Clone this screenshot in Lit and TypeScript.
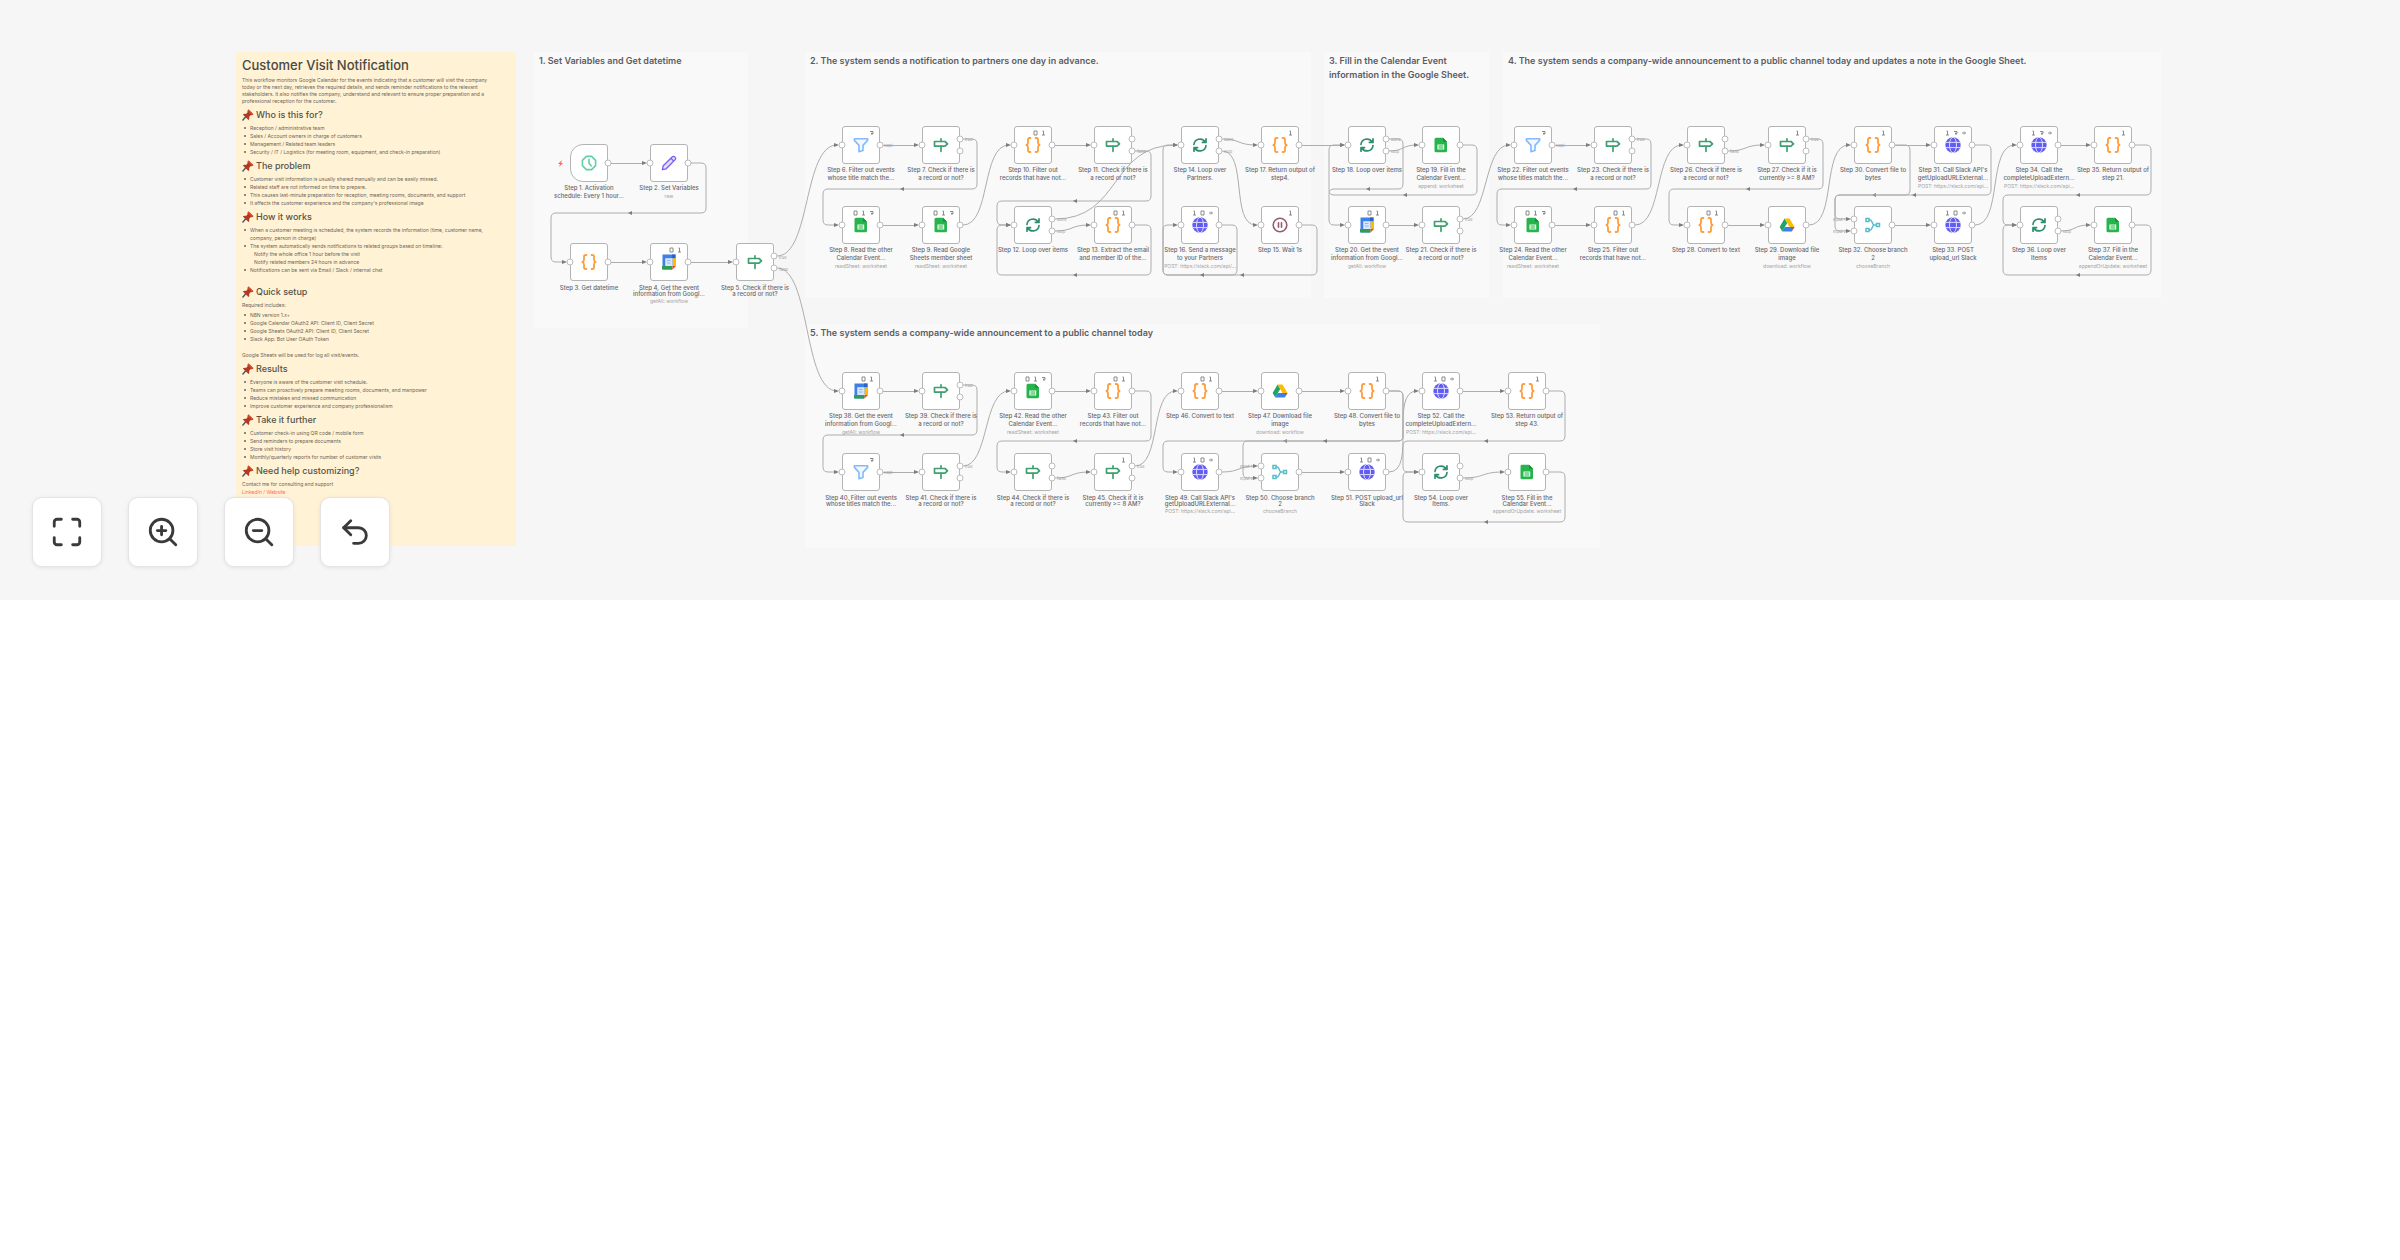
import { LitElement, html, svg, css, nothing } from "lit";
import { customElement, property } from "lit/decorators.js";
import { classMap } from "lit/directives/class-map.js";

type IconName =
  | "clock" | "pencil" | "code" | "calendar" | "sign" | "filter"
  | "sheet" | "loop" | "http" | "wait" | "drive" | "merge";

interface FlowNode {
  x: number;
  y: number;
  icon: IconName;
  lines: string[];
  sub?: string;
  badges?: string;
  tight?: boolean;
}

interface Section {
  x: number;
  y: number;
  w: number;
  h: number;
  title: string[];
}

const SECTIONS: Section[] = [
  { x: 534, y: 52, w: 214, h: 276, title: ["1. Set Variables and Get datetime"] },
  { x: 805, y: 52, w: 506, h: 246, title: ["2. The system sends a notification to partners one day in advance."] },
  { x: 1324, y: 52, w: 165, h: 246, title: ["3. Fill in the Calendar Event", "information in the Google Sheet."] },
  { x: 1503, y: 52, w: 658, h: 246, title: ["4. The system sends a company-wide announcement to a public channel today and updates a note in the Google Sheet."] },
  { x: 805, y: 324, w: 795, h: 224, title: ["5. The system sends a company-wide announcement to a public channel today"] },
];

const node = (
  x: number, y: number, icon: IconName, lines: string[], badges = "", sub = "",
): FlowNode => ({ x, y, icon, lines, badges, sub, tight: y === 262 || y === 472 });

const NODES: FlowNode[] = [
  node(589, 163, "clock", ["Step 1. Activation", "schedule: Every 1 hour..."]),
  node(669, 163, "pencil", ["Step 2. Set Variables"], "", "raw"),
  node(589, 262, "code", ["Step 3. Get datetime"]),
  node(669, 262, "calendar", ["Step 4. Get the event", "information from Googl..."], "c1", "getAll: workflow"),
  node(755, 262, "sign", ["Step 5. Check if there is", "a record or not?"]),

  node(861, 145, "filter", ["Step 6. Filter out events", "whose title match the..."], "r"),
  node(941, 145, "sign", ["Step 7. Check if there is", "a record or not?"]),
  node(861, 225, "sheet", ["Step 8. Read the other", "Calendar Event..."], "c1r", "readSheet: worksheet"),
  node(941, 225, "sheet", ["Step 9. Read Google", "Sheets member sheet"], "c1r", "readSheet: worksheet"),
  node(1033, 145, "code", ["Step 10. Filter out", "records that have not..."], "c1"),
  node(1113, 145, "sign", ["Step 11. Check if there is", "a record or not?"]),
  node(1033, 225, "loop", ["Step 12. Loop over items"]),
  node(1113, 225, "code", ["Step 13. Extract the email", "and member ID of the..."], "c1"),
  node(1200, 145, "loop", ["Step 14. Loop over", "Partners."]),
  node(1280, 145, "code", ["Step 17. Return output of", "step4."], "1"),
  node(1200, 225, "http", ["Step 16. Send a message", "to your Partners"], "1cp", "POST: https://slack.com/api/..."),
  node(1280, 225, "wait", ["Step 15. Wait 1s"], "1"),

  node(1367, 145, "loop", ["Step 18. Loop over items"]),
  node(1441, 145, "sheet", ["Step 19. Fill in the", "Calendar Event..."], "", "append: worksheet"),
  node(1367, 225, "calendar", ["Step 20. Get the event", "information from Googl..."], "c1", "getAll: workflow"),
  node(1441, 225, "sign", ["Step 21. Check if there is", "a record or not?"]),

  node(1533, 145, "filter", ["Step 22. Filter out events", "whose titles match the..."], "r"),
  node(1613, 145, "sign", ["Step 23. Check if there is", "a record or not?"]),
  node(1533, 225, "sheet", ["Step 24. Read the other", "Calendar Event..."], "c1r", "readSheet: worksheet"),
  node(1613, 225, "code", ["Step 25. Filter out", "records that have not..."], "c1"),
  node(1706, 145, "sign", ["Step 26. Check if there is", "a record or not?"]),
  node(1787, 145, "sign", ["Step 27. Check if it is", "currently >= 8 AM?"], "1"),
  node(1706, 225, "code", ["Step 28. Convert to text"], "c1"),
  node(1787, 225, "drive", ["Step 29. Download file", "image"], "", "download: workflow"),
  node(1873, 145, "code", ["Step 30. Convert file to", "bytes"], "1"),
  node(1953, 145, "http", ["Step 31. Call Slack API's", "getUploadURLExternal..."], "1rp", "POST: https://slack.com/api..."),
  node(1873, 225, "merge", ["Step 32. Choose branch", "2"], "", "chooseBranch"),
  node(1953, 225, "http", ["Step 33. POST", "upload_url Slack"], "1cp"),
  node(2039, 145, "http", ["Step 34. Call the", "completeUploadExtern..."], "1rp", "POST: https://slack.com/api..."),
  node(2113, 145, "code", ["Step 35. Return output of", "step 21."], "1"),
  node(2039, 225, "loop", ["Step 36. Loop over", "Items"]),
  node(2113, 225, "sheet", ["Step 37. Fill in the", "Calendar Event..."], "", "appendOrUpdate: worksheet"),

  node(861, 391, "calendar", ["Step 38. Get the event", "information from Googl..."], "c1", "getAll: workflow"),
  node(941, 391, "sign", ["Step 39. Check if there is", "a record or not?"]),
  node(861, 472, "filter", ["Step 40. Filter out events", "whose titles match the..."], "r"),
  node(941, 472, "sign", ["Step 41. Check if there is", "a record or not?"]),
  node(1033, 391, "sheet", ["Step 42. Read the other", "Calendar Event..."], "c1r", "readSheet: worksheet"),
  node(1113, 391, "code", ["Step 43. Filter out", "records that have not..."], "c1"),
  node(1033, 472, "sign", ["Step 44. Check if there is", "a record or not?"]),
  node(1113, 472, "sign", ["Step 45. Check if it is", "currently >= 8 AM?"], "1"),
  node(1200, 391, "code", ["Step 46. Convert to text"], "c1"),
  node(1280, 391, "drive", ["Step 47. Download file", "image"], "", "download: workflow"),
  node(1200, 472, "http", ["Step 49. Call Slack API's", "getUploadURLExternal..."], "1cp", "POST: https://slack.com/api..."),
  node(1280, 472, "merge", ["Step 50. Choose branch", "2"], "", "chooseBranch"),
  node(1367, 391, "code", ["Step 48. Convert file to", "bytes"], "1"),
  node(1441, 391, "http", ["Step 52. Call the", "completeUploadExtern..."], "1cp", "POST: https://slack.com/api..."),
  node(1367, 472, "http", ["Step 51. POST upload_url", "Slack"], "1cp"),
  node(1441, 472, "loop", ["Step 54. Loop over", "Items."]),
  node(1527, 391, "code", ["Step 53. Return output of", "step 43."], "1"),
  node(1527, 472, "sheet", ["Step 55. Fill in the", "Calendar Event..."], "", "appendOrUpdate: worksheet"),
];

/* Straight links: [source centre x, target centre x, y] */
const STRAIGHT: number[][] = [
  [589, 669, 163], [589, 669, 262], [669, 755, 262],
  [861, 941, 145], [861, 941, 225], [1033, 1113, 145], [1280, 1367, 145],
  [1367, 1441, 225],
  [1533, 1613, 145], [1533, 1613, 225], [1706, 1787, 225], [1873, 1953, 145],
  [1873, 1953, 225], [2039, 2113, 145],
  [861, 941, 391], [861, 941, 472], [1033, 1113, 391], [1200, 1280, 391],
  [1280, 1367, 391], [1280, 1367, 472], [1441, 1527, 391],
];

/* S-curves: [source centre x, out y, target centre x, in y] */
const CURVES: number[][] = [
  [755, 256, 861, 145], [755, 268, 861, 391],
  [941, 225, 1033, 145], [1033, 219, 1200, 145], [1033, 231, 1113, 225],
  [1200, 139, 1280, 145], [1200, 151, 1280, 225],
  [1367, 151, 1441, 145], [1441, 219, 1533, 145],
  [1613, 225, 1706, 145], [1706, 151, 1787, 145], [1787, 225, 1873, 145],
  [1953, 225, 2039, 145], [2039, 231, 2113, 225],
  [941, 466, 1033, 391], [1033, 478, 1113, 472], [1113, 466, 1200, 391],
  [1200, 472, 1280, 466], [1367, 472, 1441, 391], [1441, 478, 1527, 472],
];

/* Wrap-around links: [source x, out y, right x, middle y, left x, target x, in y, arrow x] */
const WRAPS: number[][] = [
  [669, 163, 706, 213, 551, 589, 262, 630],
  [941, 139, 977, 189, 823, 861, 225, 902],
  [1113, 151, 1151, 201, 997, 1033, 225, 1075],
  [1113, 225, 1151, 275, 997, 1033, 225, 1075],
  [1280, 225, 1317, 275, 1163, 1200, 225, 1242],
  [1200, 225, 1237, 275, 1163, 1200, 145, 1202],
  [1367, 139, 1403, 189, 1329, 1367, 225, 1368],
  [1441, 145, 1477, 195, 1329, 1367, 145, 1405],
  [1613, 139, 1651, 189, 1497, 1533, 225, 1575],
  [1787, 139, 1823, 189, 1669, 1706, 225, 1748],
  [1873, 145, 1910, 195, 1835, 1873, 231, 1874],
  [1953, 145, 1991, 195, 1835, 1873, 219, 1914],
  [2113, 145, 2151, 195, 2003, 2039, 225, 2078],
  [2113, 225, 2151, 275, 2003, 2039, 225, 2078],
  [941, 385, 977, 435, 823, 861, 472, 902],
  [1113, 391, 1151, 441, 997, 1033, 472, 1075],
  [1367, 391, 1403, 441, 1163, 1200, 472, 1285],
  [1367, 391, 1403, 441, 1243, 1280, 478, 1325],
  [1527, 391, 1565, 441, 1403, 1441, 472, 1486],
  [1527, 472, 1565, 522, 1403, 1441, 472, 1486],
];

const EDGE_LABELS: [number, number, string][] = [
  [779, 258, "true"], [779, 270, "false"], [884, 146, "Kept"], [965, 140, "true"],
  [1057, 220, "done"], [1057, 232, "loop"], [1137, 152, "false"], [1224, 140, "done"],
  [1224, 152, "loop"], [1391, 140, "done"], [1391, 152, "loop"], [1465, 220, "true"],
  [1556, 146, "Kept"], [1637, 140, "true"], [1730, 152, "false"], [1811, 140, "true"],
  [2063, 232, "loop"], [965, 386, "true"], [884, 473, "Kept"], [965, 467, "true"],
  [1057, 479, "false"], [1137, 467, "true"], [1465, 479, "loop"],
  [1833, 220, "Input 1"], [1833, 232, "Input 2"], [1240, 467, "Input 1"], [1240, 479, "Input 2"],
];

function wrapPath([sx, sy, r, m, l, tx, ty]: number[]): string {
  const c = 5;
  const v = ty > m ? 1 : -1;
  return (
    `M${sx + 22},${sy} H${r - c} Q${r},${sy} ${r},${sy + c} V${m - c} Q${r},${m} ${r - c},${m} ` +
    `H${l + c} Q${l},${m} ${l},${m + v * c} V${ty - v * c} Q${l},${ty} ${l + c},${ty} H${tx - 24}`
  );
}

function curvePath([sx, sy, tx, ty]: number[]): string {
  const a = sx + 22;
  const b = tx - 24;
  const k = Math.max(Math.abs(b - a) * 0.55, Math.min(Math.abs(ty - sy) * 0.35, 34));
  return `M${a},${sy} C${a + k},${sy} ${b - k},${ty} ${b},${ty}`;
}

const tip = (x: number, y: number) => svg`<path class="tip" d="M${x - 27},${y - 2}l5,2l-5,2z"></path>`;

const ICONS: Record<IconName, unknown> = {
  clock: svg`<g fill="none" stroke="#63cfa3" stroke-width="1.6" stroke-linecap="round" stroke-linejoin="round"><path d="M5.4 1.4h5.2l4 4v5.200l-4 4H5.400l-4-4V5.400z"></path><path d="M8 4.200v4l2.200 2.600"></path></g>`,
  pencil: svg`<g fill="#e4dcff" stroke="#7a5cf0" stroke-width="1.300" stroke-linejoin="round"><path d="M1.400 14.600l.8-3.800L11.400 1.800a1.500 1.500 0 0 1 2.200 0l.6.6a1.500 1.500 0 0 1 0 2.200L5.200 13.800z"></path><path d="M10 3.400l2.600 2.600"></path></g>`,
  code: svg`<g fill="none" stroke="#ff9d3c" stroke-width="1.800" stroke-linecap="round" stroke-linejoin="round"><path d="M5.400 1H4.600C3.400 1 3 1.700 3 2.800v2.700C3 7 2.300 7.600 1.300 8 2.300 8.400 3 9 3 10.500v2.700C3 14.300 3.400 15 4.600 15h.8"></path><path d="M10.600 1h.8c1.200 0 1.600.7 1.600 1.800v2.700c0 1.500.7 2.100 1.700 2.500-1 .4-1.700 1-1.700 2.500v2.700c0 1.100-.4 1.800-1.600 1.800h-.8"></path></g>`,
  calendar: svg`<path fill="#3f7fe8" d="M1.500.5h13v11h-3.500v4h-9.500z"></path><path fill="#2a62d0" d="M11 .5h3.500V4H11z"></path><path fill="#fbbc04" d="M11.500 4.200h3.500v7.800h-3.500z"></path><path fill="#2f9e4f" d="M1 12h10.500v3.500H2a1 1 0 0 1-1-1z"></path><path fill="#ea4335" d="M11.500 12H15l-3.500 3.500z"></path><path fill="#d7e6ff" d="M4.200 4.200h7.300V12H4.200z"></path><path fill="none" stroke="#8db7f7" d="M6 6.500h3.500M6 9h3.500"></path>`,
  sign: svg`<g fill="none" stroke="#3f9f70" stroke-width="1.700" stroke-linejoin="round" stroke-linecap="round"><path d="M1.500 4.500h10.500l2.500 2.300-2.500 2.300H1.500z"></path><path d="M8 1.800v2.500M8 9.300v5"></path></g>`,
  filter: svg`<path fill="#f2f8ff" stroke="#84bafa" stroke-width="1.600" stroke-linejoin="round" d="M1.400 1.800h13.200v1.600L10 8.400v5.200l-4 1.200V8.400L1.400 3.400z"></path>`,
  sheet: svg`<path fill="#28b44c" d="M3 .8h7l4 4v9a1.500 1.500 0 0 1-1.500 1.500H3a1.500 1.500 0 0 1-1.500-1.500V2.300A1.500 1.500 0 0 1 3 .8z"></path><path fill="#1b8f3a" d="M10 .8l4 4h-4z"></path><path fill="none" stroke="#e8fbe9" stroke-width="1.200" d="M5 8h5.600v4H5zM5 10h5.600"></path>`,
  loop: svg`<g fill="none" stroke="#2f8f6c" stroke-width="1.700" stroke-linecap="round" stroke-linejoin="round"><path d="M2 7.500A6 6 0 0 1 13 4.800M14 1.800v3.600h-3.600"></path><path d="M14 8.500A6 6 0 0 1 3 11.200M2 14.200v-3.600h3.600"></path></g>`,
  http: svg`<circle cx="8" cy="8" r="7.700" fill="#625df2"></circle><g fill="none" stroke="#dedcff" stroke-width="1"><ellipse cx="8" cy="8" rx="3.500" ry="7.700"></ellipse><path d="M1 5.400h14M1 10.600h14"></path></g>`,
  wait: svg`<g fill="none" stroke="#965a74" stroke-width="1.600" stroke-linecap="round"><circle cx="8" cy="8" r="6.800"></circle><path d="M6.500 5.800v4.400M9.500 5.800v4.400"></path></g>`,
  drive: svg`<path fill="#1fa463" d="M5.600 1.600L8.200 6 3.300 14.400.6 9.900z"></path><path fill="#fbbc04" d="M5.600 1.600h4.900l5 8.300h-5z"></path><path fill="#3f7fe8" d="M3.300 14.400l2.500-4.500h9.700l-2.700 4.500z"></path><path fill="#ea4335" d="M12 9.900h3.500l-1.500 2.400z"></path>`,
  merge: svg`<g fill="none" stroke="#59bccb" stroke-width="1.500"><path d="M4 3h1.500C7 3 7.500 8 9 8h2M4 13h1.500C7 13 7.500 8 9 8"></path><path d="M1 1.500h3v3H1zM1 11.500h3v3H1zM11.500 6.500h3v3h-3z"></path></g>`,
};

const BADGES: Record<string, unknown> = {
  c: svg`<path d="M1 1h3v4H1z"></path>`,
  "1": svg`<path d="M1.500 1h1v4M1 5h3"></path>`,
  r: svg`<path d="M1 1.500h3v2H2M3 2.500v2.500"></path>`,
  p: svg`<path d="M1 3h3M3 1.500L4.500 3 3 4.500"></path>`,
};

const PIN = html`<svg class="pin" viewBox="0 0 12 12" aria-hidden="true">
  <path d="M.5 11.500L4.200 7.300" stroke="#4a5560" stroke-width="1.400"></path>
  <path fill="#b03a22" d="M.8 5.400c1-.8 2.200-.9 3.200-.5l1.600-1.700c-.3-1 0-1.900.8-2.700l5 4.800c-.8.900-1.900 1.200-2.900.9L7.100 7.900c.4 1.100.2 2.200-.6 3.200z"></path>
  <path fill="#dd4b2c" d="M6.600.6l4.700 4.500-1.400.9L5.800 2z"></path>
</svg>`;

@customElement("flow-node")
class FlowNodeElement extends LitElement {
  @property({ attribute: false }) node!: FlowNode;

  static styles = css`
    :host { display: flex; flex-direction: column; align-items: center; width: 80px; }
    .box {
      box-sizing: border-box; width: 38px; height: 38px; background: #fff;
      border: 1px solid #b4b4b4; border-radius: 3px; position: relative;
      display: grid; place-items: center;
    }
    .trigger { border-radius: 13px 3px 3px 13px; }
    .icon { width: 16px; height: 16px; display: block; }
    .badges { position: absolute; top: 3px; right: 4px; display: flex; gap: 2px; }
    .badge { width: 6px; height: 6px; fill: none; stroke: #8a8a8a; stroke-width: 1; }
    .label {
      margin-top: 2px; text-align: center; white-space: nowrap;
      font-size: 6px; line-height: 8px; font-weight: 500; color: #66666e;
    }
    .sub { font-size: 5px; line-height: 8px; color: #a3a3a3; white-space: nowrap; }
    .tight .label { line-height: 6px; margin-top: 4px; }
    .wrap { display: flex; flex-direction: column; align-items: center; }
  `;

  render() {
    const n = this.node;
    return html`<div class=${classMap({ wrap: true, tight: !!n.tight })}>
      <div class=${classMap({ box: true, trigger: n.icon === "clock" })}>
        <svg class="icon" viewBox="0 0 16 16" aria-hidden="true">${ICONS[n.icon]}</svg>
        ${n.badges
          ? html`<div class="badges">${[...n.badges].map(
              (b) => html`<svg class="badge" viewBox="0 0 6 6" aria-hidden="true">${BADGES[b]}</svg>`,
            )}</div>`
          : nothing}
      </div>
      <div class="label">${n.lines.map((l) => html`<div>${l}</div>`)}</div>
      ${n.sub ? html`<div class="sub">${n.sub}</div>` : nothing}
    </div>`;
  }
}

@customElement("sticky-note")
class StickyNote extends LitElement {
  static styles = css`
    :host {
      display: block; box-sizing: border-box; background: #fff2d5; padding: 5px 6px;
      color: #6d6659; font-size: 5px; line-height: 8px; white-space: nowrap;
    }
    h1 { margin: 0 0 3px; font-size: 13px; line-height: 17px; font-weight: 500; color: #4a4843; }
    h2 {
      margin: 0; display: flex; align-items: center; gap: 2px; height: 19px;
      font-size: 9px; font-weight: 500; color: #55524b;
    }
    .pin { width: 12px; height: 12px; flex: none; }
    p { margin: 0; }
    .intro { line-height: 7px; }
    .gap { margin-bottom: 8px; }
    .lead { margin-bottom: 2px; }
    ul { margin: 0; padding: 0 0 0 8px; list-style: none; }
    li.dot::before {
      content: ""; display: inline-block; width: 2px; height: 2px; border-radius: 1px;
      background: #6d6659; margin: 0 4px 1px -6px;
    }
    .sub { padding-left: 4px; }
    a { color: #ff6d5a; text-decoration: none; }
  `;

  private list(items: string[], gap = false) {
    return html`<ul class=${gap ? "gap" : ""}>
      ${items.map((t) =>
        t.startsWith(">")
          ? html`<li class="sub">${t.slice(1)}</li>`
          : t.startsWith("|")
            ? html`<li>${t.slice(1)}</li>`
            : html`<li class="dot">${t}</li>`,
      )}
    </ul>`;
  }

  render() {
    return html`
      <h1>Customer Visit Notification</h1>
      <p class="intro">
        This workflow monitors Google Calendar for the events indicating that a customer will visit the company<br />
        today or the next day, retrieves the required details, and sends reminder notifications to the relevant<br />
        stakeholders. It also notifies the company, understand and relevant to ensure proper preparation and a<br />
        professional reception for the customer.
      </p>
      <h2>${PIN}Who is this for?</h2>
      ${this.list([
        "Reception / administrative team",
        "Sales / Account owners in charge of customers",
        "Management / Related team leaders",
        "Security / IT / Logistics (for meeting room, equipment, and check-in preparation)",
      ])}
      <h2>${PIN}The problem</h2>
      ${this.list([
        "Customer visit information is usually shared manually and can be easily missed.",
        "Related staff are not informed on time to prepare.",
        "This causes last-minute preparation for reception, meeting rooms, documents, and support",
        "It affects the customer experience and the company's professional image",
      ])}
      <h2>${PIN}How it works</h2>
      ${this.list([
        "When a customer meeting is scheduled, the system records the information (time, customer name,",
        "|company, person in charge)",
        "The system automatically sends notifications to related groups based on timeline:",
        ">Notify the whole office 1 hour before the visit",
        ">Notify related members 24 hours in advance",
        "Notifications can be sent via Email / Slack / internal chat",
      ], true)}
      <h2>${PIN}Quick setup</h2>
      <p class="lead">Required includes:</p>
      ${this.list([
        "N8N version 1.x+",
        "Google Calendar OAuth2 API: Client ID, Client Secret",
        "Google Sheets OAuth2 API: Client ID, Client Secret",
        "Slack App: Bot User OAuth Token",
      ], true)}
      <p>Google Sheets will be used for log all visit/events.</p>
      <h2>${PIN}Results</h2>
      ${this.list([
        "Everyone is aware of the customer visit schedule.",
        "Teams can proactively prepare meeting rooms, documents, and manpower",
        "Reduce mistakes and missed communication",
        "Improve customer experience and company professionalism",
      ])}
      <h2>${PIN}Take it further</h2>
      ${this.list([
        "Customer check-in using QR code / mobile form",
        "Send reminders to prepare documents",
        "Store visit history",
        "Monthly/quarterly reports for number of customer visits",
      ])}
      <h2>${PIN}Need help customizing?</h2>
      <p>Contact me for consulting and support</p>
      <p><a href="#">LinkedIn / Website</a></p>
    `;
  }
}

@customElement("app-root")
class AppRoot extends LitElement {
  static styles = css`
    :host { display: block; min-height: 100vh; background: #fff; font-family: Inter, "Liberation Sans", sans-serif; }
    .canvas { position: relative; width: 100%; height: 600px; overflow: hidden; background: #f6f6f6; }
    .section { position: absolute; box-sizing: border-box; background: #f9f9f9; padding: 2px 5px; }
    .section h2 { margin: 0; font-size: 9px; line-height: 14px; font-weight: 600; color: #5c5c62; white-space: nowrap; }
    sticky-note { position: absolute; left: 236px; top: 52px; width: 280px; height: 494px; }
    flow-node { position: absolute; }
    .edges { position: absolute; inset: 0; width: 100%; height: 100%; pointer-events: none; }
    .edge { fill: none; stroke: #adadad; stroke-width: 1; }
    .tip { fill: #7d7d7d; }
    .handle { fill: #fff; stroke: #bdbdbd; stroke-width: 1; }
    .tag { font-size: 4px; fill: #9b9b9b; }
    .bolt { fill: #ff6d5a; }
    .controls { position: absolute; left: 32px; bottom: 33px; display: flex; gap: 26px; }
    .control {
      width: 70px; height: 70px; padding: 0; border: 1px solid #e4e4e4; border-radius: 10px;
      background: #fff; box-shadow: 0 1px 4px rgba(0, 0, 0, 0.08);
      display: grid; place-items: center; cursor: pointer;
    }
    .control svg {
      width: 34px; height: 34px; fill: none; stroke: #3a3a3a; stroke-width: 2;
      stroke-linecap: round; stroke-linejoin: round;
    }
  `;

  private outputs(n: FlowNode): number[] {
    return n.icon === "sign" || n.icon === "loop" ? [n.y - 6, n.y + 6] : [n.y];
  }

  private inputs(n: FlowNode): number[] {
    if (n.icon === "clock") return [];
    return n.icon === "merge" ? [n.y - 6, n.y + 6] : [n.y];
  }

  private control(label: string, shape: unknown) {
    return html`<button class="control" type="button" aria-label=${label}>
      <svg viewBox="0 0 24 24" aria-hidden="true">${shape}</svg>
    </button>`;
  }

  render() {
    return html`<main class="canvas">
      ${SECTIONS.map(
        (s) => html`<section class="section" style="left:${s.x}px;top:${s.y}px;width:${s.w}px;height:${s.h}px">
          <h2>${s.title.map((t) => html`<div>${t}</div>`)}</h2>
        </section>`,
      )}
      <sticky-note></sticky-note>
      <svg class="edges" aria-hidden="true">
        ${STRAIGHT.map(([a, b, y]) => svg`<path class="edge" d="M${a + 22},${y + 0.5}H${b - 24}"></path>${tip(b, y)}`)}
        ${CURVES.map((c) => svg`<path class="edge" d=${curvePath(c)}></path>${tip(c[2], c[3])}`)}
        ${WRAPS.map((w) => svg`<path class="edge" d=${wrapPath(w)}></path>${tip(w[5], w[6])}
          <path class="tip" d="M${w[7] + 2},${w[3] - 2}l-4,2l4,2z"></path>`)}
      </svg>
      ${NODES.map(
        (n) => html`<flow-node .node=${n} style="left:${n.x - 40}px;top:${n.y - 19}px"></flow-node>`,
      )}
      <svg class="edges" aria-hidden="true">
        <path class="bolt" d="M562,160l-4,4h2l-1,3l4,-4h-2z"></path>
        ${NODES.map((n) => [
          ...this.inputs(n).map((y) => svg`<circle class="handle" cx=${n.x - 19} cy=${y} r="3"></circle>`),
          ...this.outputs(n).map((y) => svg`<circle class="handle" cx=${n.x + 19} cy=${y} r="3"></circle>`),
        ])}
        ${EDGE_LABELS.map(([x, y, t]) => svg`<text class="tag" x=${x} y=${y + 1}>${t}</text>`)}
      </svg>
      <nav class="controls" aria-label="Canvas controls">
        ${this.control("Zoom to fit", svg`<path d="M3 8V5a2 2 0 0 1 2-2h3M16 3h3a2 2 0 0 1 2 2v3M21 16v3a2 2 0 0 1-2 2h-3M8 21H5a2 2 0 0 1-2-2v-3"></path>`)}
        ${this.control("Zoom in", svg`<circle cx="11" cy="11" r="8"></circle><path d="M21 21l-4.300-4.300M11 8v6M8 11h6"></path>`)}
        ${this.control("Zoom out", svg`<circle cx="11" cy="11" r="8"></circle><path d="M21 21l-4.300-4.300M8 11h6"></path>`)}
        ${this.control("Reset zoom", svg`<path d="M9 14L4 9l5-5"></path><path d="M4 9h10.500a5.500 5.500 0 0 1 0 11H11"></path>`)}
      </nav>
    </main>`;
  }
}
